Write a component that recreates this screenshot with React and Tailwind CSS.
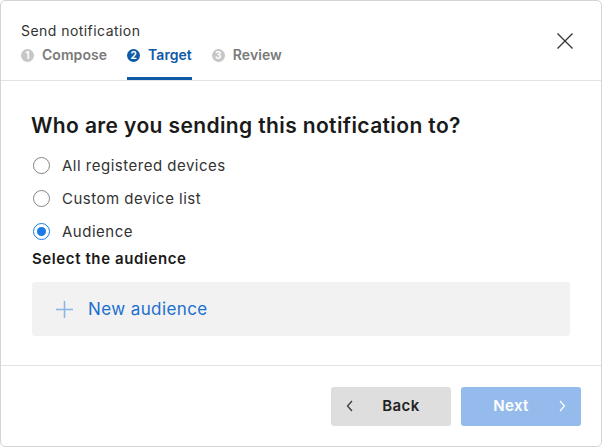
import { useState } from 'react';

const steps = [
  { n: 1, label: 'Compose' },
  { n: 2, label: 'Target' },
  { n: 3, label: 'Review' },
];

const targets = ['All registered devices', 'Custom device list', 'Audience'];

function Radio({ checked }) {
  return (
    <span
      className={
        'flex h-[17px] w-[17px] shrink-0 items-center justify-center rounded-full border-[1.5px] ' +
        (checked ? 'border-[#1a7ae6]' : 'border-[#858585]')
      }
    >
      {checked && <span className="h-[9px] w-[9px] rounded-full bg-[#1a7ae6]" />}
    </span>
  );
}

export default function App() {
  const [target, setTarget] = useState('Audience');

  return (
    <div
      className="flex h-[447px] w-[602px] flex-col overflow-hidden rounded-[5px] border border-[#d4d4d4] bg-white"
      style={{ fontFamily: 'Inter, "Noto Sans", sans-serif' }}
    >
      <div className="relative border-b border-[#e3e3e3] px-[20px] pt-[21px]">
        <div className="text-[14px] leading-[18px] tracking-[0.45px] text-[#333]">Send notification</div>
        <div className="mt-[6px] flex gap-[20px]">
          {steps.map((s) => {
            const active = s.n === 2;
            return (
              <div
                key={s.n}
                className={
                  'flex items-center gap-[8px] border-b-[3px] pb-[13px] ' +
                  (active ? 'border-[#0f5aa6]' : 'border-transparent')
                }
              >
                <span
                  className={
                    'flex h-[13px] w-[13px] items-center justify-center rounded-full text-[10px] font-bold leading-none text-white ' +
                    (active ? 'bg-[#0f5aa6]' : 'bg-[#c6c6c6]')
                  }
                >
                  {s.n}
                </span>
                <span
                  className={
                    'text-[14px] font-semibold leading-[18px] tracking-[0.05px] ' +
                    (active ? 'text-[#0f5aa6]' : 'text-[#7a7a7a]')
                  }
                >
                  {s.label}
                </span>
              </div>
            );
          })}
        </div>
        <button className="absolute right-[27px] top-[31px] text-[#333]">
          <svg width="18" height="18" viewBox="0 0 18 18" fill="none" stroke="currentColor" strokeWidth="1.3">
            <path d="M1.5 1.5 L16.5 16.5 M16.5 1.5 L1.5 16.5" />
          </svg>
        </button>
      </div>

      <div className="flex-1 pl-[31px] pr-[31px] pt-[33px]">
        <h1 className="-ml-[1px] text-[21px] font-semibold leading-[24px] tracking-[0.38px] text-[#1a1a1a]">
          Who are you sending this notification to?
        </h1>
        <div className="mt-[11px] flex flex-col">
          {targets.map((t) => (
            <label
              key={t}
              className="flex h-[33px] cursor-pointer items-center gap-[12px] pl-[1px]"
              onClick={() => setTarget(t)}
            >
              <Radio checked={target === t} />
              <span className="text-[15px] leading-[20px] tracking-[0.5px] text-[#333]">{t}</span>
            </label>
          ))}
        </div>
        <div className="mt-[1px] text-[15px] font-semibold leading-[20px] tracking-[0.6px] text-[#1a1a1a]">
          Select the audience
        </div>
        <button className="mt-[13px] flex h-[54px] w-full items-center gap-[15px] rounded-[3px] bg-[#f2f2f2] pl-[24px] text-left">
          <svg width="17" height="17" viewBox="0 0 17 17" fill="none" stroke="#8ab3e6" strokeWidth="1.5">
            <path d="M8.5 0 V17 M0 8.5 H17" />
          </svg>
          <span className="text-[17px] leading-[22px] tracking-[0.4px] text-[#1b6fcf]">New audience</span>
        </button>
      </div>

      <div className="flex h-[81px] items-center justify-end gap-[10px] border-t border-[#e3e3e3] pr-[20px]">
        <button className="relative flex h-[39px] w-[120px] items-center justify-center rounded-[3px] bg-[#dedede] pl-[20px] text-[15px] font-semibold tracking-[0.4px] text-[#222]">
          <svg className="absolute left-[15px]" width="8" height="12" viewBox="0 0 8 12" fill="none" stroke="#333" strokeWidth="1.2">
            <path d="M6 1 L1.5 6 L6 11" />
          </svg>
          Back
        </button>
        <button className="relative flex h-[39px] w-[120px] items-center justify-center rounded-[3px] bg-[#94bbeb] pr-[20px] text-[15px] font-semibold tracking-[0.4px] text-white">
          Next
          <svg className="absolute right-[15px]" width="8" height="12" viewBox="0 0 8 12" fill="none" stroke="#fff" strokeWidth="1.2">
            <path d="M2 1 L6.5 6 L2 11" />
          </svg>
        </button>
      </div>
    </div>
  );
}
